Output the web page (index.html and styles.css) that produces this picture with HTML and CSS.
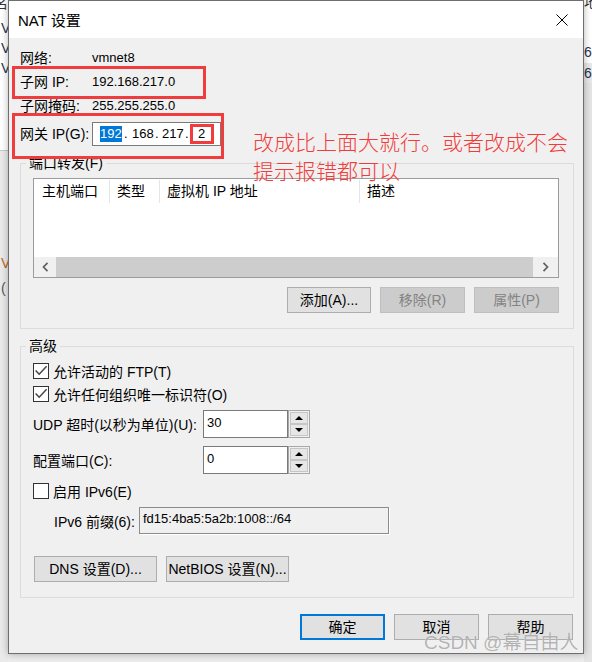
FILE: index.html
```html
<!DOCTYPE html>
<html lang="zh-CN">
<head>
<meta charset="utf-8">
<title>NAT 设置</title>
<link rel="stylesheet" href="styles.css">
</head>
<body>
<div class="desk">
  <div class="strip strip-l">
    <div class="sl sl1">名</div>
    <div class="sl sl2">V</div>
    <div class="sl">V</div>
    <div class="sl">V</div>
    <div class="sl sl5">V</div>
    <div class="sl sl6">(</div>
  </div>

  <div class="dialog">
    <div class="titlebar">
      <span class="title">NAT 设置</span>
      <svg class="close" width="12" height="12" viewBox="0 0 12 12"><path d="M0.5 0.5 L11.5 11.5 M11.5 0.5 L0.5 11.5" stroke="#000" stroke-width="1" fill="none"/></svg>
    </div>

    <div class="content">
      <div class="info">
        <div class="lbl">网络:</div><div class="val">vmnet8</div>
        <div class="lbl">子网 IP:</div><div class="val">192.168.217.0</div>
        <div class="lbl">子网掩码:</div><div class="val">255.255.255.0</div>
        <div class="lbl gw">网关 IP(G):</div>
        <div class="val gw">
          <div class="ipbox">
            <span class="sel">192</span><span class="dot d1">.</span><span class="seg">168</span><span class="dot d2">.</span><span class="seg">217</span><span class="dot d3">.</span><span class="seg seg4">2</span>
          </div>
        </div>
      </div>

      <fieldset class="group g1">
        <legend>端口转发(F)</legend>
        <div class="list">
          <div class="lhead">
            <div class="col c1">主机端口</div>
            <div class="col c2">类型</div>
            <div class="col c3">虚拟机 IP 地址</div>
            <div class="col c4">描述</div>
          </div>
          <div class="lbody"></div>
          <div class="hscroll">
            <div class="sbtn sl-btn"><svg width="7" height="10" viewBox="0 0 7 10"><polyline points="5.5,0.8 1.5,5 5.5,9.2" fill="none" stroke="#606060" stroke-width="1.7"/></svg></div>
            <div class="thumb"></div>
            <div class="sbtn sr-btn"><svg width="7" height="10" viewBox="0 0 7 10"><polyline points="1.5,0.8 5.5,5 1.5,9.2" fill="none" stroke="#606060" stroke-width="1.7"/></svg></div>
          </div>
        </div>
        <div class="btnrow">
          <button class="btn w84">添加(A)...</button>
          <button class="btn dis w85">移除(R)</button>
          <button class="btn dis w85">属性(P)</button>
        </div>
      </fieldset>

      <fieldset class="group g2">
        <legend>高级</legend>
        <div class="chk first">
          <span class="cbox"><svg width="14" height="14" viewBox="0 0 14 14"><polyline points="1.6,6.4 5.2,10.2 12.6,2.2" fill="none" stroke="#454545" stroke-width="1.5"/></svg></span>
          <span>允许活动的 FTP(T)</span>
        </div>
        <div class="chk">
          <span class="cbox"><svg width="14" height="14" viewBox="0 0 14 14"><polyline points="1.6,6.4 5.2,10.2 12.6,2.2" fill="none" stroke="#454545" stroke-width="1.5"/></svg></span>
          <span>允许任何组织唯一标识符(O)</span>
        </div>
        <div class="frow udp">
          <div class="flabel">UDP 超时(以秒为单位)(U):</div>
          <div class="spin">
            <div class="spin-in">30</div>
            <div class="spin-btns"><div class="sb up"></div><div class="sb down"></div></div>
          </div>
        </div>
        <div class="frow port">
          <div class="flabel">配置端口(C):</div>
          <div class="spin">
            <div class="spin-in">0</div>
            <div class="spin-btns"><div class="sb up"></div><div class="sb down"></div></div>
          </div>
        </div>
        <div class="chk v6">
          <span class="cbox"></span>
          <span>启用 IPv6(E)</span>
        </div>
        <div class="prow">
          <div class="plabel">IPv6 前缀(6):</div>
          <div class="pfield">fd15:4ba5:5a2b:1008::/64</div>
        </div>
        <div class="btnrow2">
          <button class="btn w123">DNS 设置(D)...</button>
          <button class="btn w123">NetBIOS 设置(N)...</button>
        </div>
      </fieldset>

      <div class="footer">
        <button class="btn w85 def">确定</button>
        <button class="btn w85">取消</button>
        <button class="btn w85">帮助</button>
      </div>
    </div>
  </div>

  <div class="strip strip-r">
    <div class="sr sr1">地</div>
    <div class="sr sr2">68</div>
    <div class="sr sr3">68</div>
  </div>

  <div class="anno a1"></div>
  <div class="anno a2"></div>
  <div class="anno a3"></div>
  <div class="note">改成比上面大就行。或者改成不会<br>提示报错都可以</div>
  <div class="watermark">CSDN @幕自由人</div>
</div>
</body>
</html>
```

FILE: styles.css
```css
* { box-sizing: border-box; }
html, body { margin: 0; padding: 0; }
body {
  width: 592px;
  height: 662px;
  overflow: hidden;
  background: #ececec;
  font-family: "Liberation Sans", "Noto Sans CJK SC", sans-serif;
  font-size: 14px;
  color: #000;
}
.desk {
  position: relative;
  width: 592px;
  height: 662px;
  overflow: hidden;
  display: flex;
  align-items: flex-start;
}

/* windows behind the dialog */
.strip {
  width: 8px;
  height: 662px;
  overflow: hidden;
  flex: none;
  font-size: 14px;
  line-height: 20px;
  color: #1f3352;
  white-space: nowrap;
}
.strip-l { background: linear-gradient(#ffffff 0, #ffffff 150px, #c8c8c8 150px, #c8c8c8 151px, #eaeaea 151px); }
.strip-r { background: linear-gradient(#ffffff 0, #ffffff 80px, #e4e4e4 80px); }
.sl { height: 20px; padding-left: 1px; }
.sl1 { margin: -7px 0 0 -7px; color: #333; }
.sl2 { margin-top: 5px; }
.sl5 { margin-top: 175px; color: #c0651e; }
.sl6 { margin-top: 5px; color: #555; }
.sr { height: 20px; }
.sr1 { margin: -8px 0 0 0; color: #333; }
.sr2 { margin-top: 30px; }
.sr3 { margin-top: 1px; background: #e8e8e8; }

/* dialog window */
.dialog {
  position: relative;
  z-index: 1;
  flex: none;
  width: 576px;
  height: 654px;
  border: 1px solid #6e6e6e;
  background: #f0f0f0;
  box-shadow: 0 0 7px rgba(0, 0, 0, 0.3);
}
.titlebar {
  height: 37px;
  background: #ffffff;
  display: flex;
  align-items: center;
  justify-content: space-between;
  padding: 0 15px 0 9px;
}
.title { font-size: 15px; }
.close { display: block; }

.content { padding: 8px 9px 0 11px; }

.info {
  display: grid;
  grid-template-columns: 72px auto;
  grid-template-rows: 24px 24px 24px 28px;
  align-items: center;
}
.lbl { line-height: 24px; white-space: nowrap; }
.val { font-size: 13px; line-height: 24px; }
.gw { align-self: end; }
.ipbox {
  width: 129px;
  height: 24px;
  border: 1px solid #7a7a7a;
  background: #ffffff;
  display: flex;
  align-items: center;
  padding-left: 7px;
  font-size: 13px;
  line-height: 16px;
}
.sel { background: #0078d7; color: #ffffff; width: 22px; }
.seg { width: 22px; }
.seg4 { width: 23px; text-align: center; }
.dot { display: block; }
.d1 { width: 10px; padding-left: 2px; }
.d2 { width: 8px; padding-left: 1px; }
.d3 { width: 6px; padding-left: 1px; }

/* group boxes */
.group {
  margin: 8px 0 0 0;
  padding: 0 0 15px 0;
  border: 1px solid #dcdcdc;
  width: 554px;
  min-width: 0;
}
.group legend {
  margin-left: 5px;
  padding: 0 3px;
  height: 19px;
  line-height: 19px;
  font-size: 14px;
}

.list {
  margin: 5px 14px 0 12px;
  height: 100px;
  border: 1px solid #9c9c9c;
  background: #ffffff;
  display: flex;
  flex-direction: column;
}
.lhead { display: flex; height: 25px; flex: none; }
.col {
  height: 23px;
  margin-top: 1px;
  line-height: 23px;
  border-right: 1px solid #e5e5e5;
  padding-left: 7px;
  white-space: nowrap;
}
.c1 { width: 76px; padding-left: 8px; }
.c2 { width: 50px; }
.c3 { width: 200px; }
.c4 { flex: 1; border-right: none; }
.lbody { flex: 1; }
.hscroll { height: 20px; flex: none; display: flex; background: #f0f0f0; }
.sbtn { display: flex; align-items: center; justify-content: center; background: #f0f0f0; }
.sl-btn { width: 22px; }
.sr-btn { width: 25px; }
.sbtn svg { display: block; }
.thumb { flex: 1; background: #cdcdcd; }

.btn {
  font-family: "Liberation Sans", "Noto Sans CJK SC", sans-serif;
  font-size: 14px;
  color: #000;
  height: 26px;
  padding: 0;
  margin: 0;
  border: 1px solid #adadad;
  background: #e1e1e1;
  line-height: 22px;
  white-space: nowrap;
}
.btn.dis { background: #cccccc; border-color: #bfbfbf; color: #838383; }
.btn.def { border: 2px solid #0078d7; }
.w84 { width: 84px; }
.w85 { width: 85px; }
.w123 { width: 123px; }

.btnrow {
  display: flex;
  justify-content: flex-end;
  gap: 9px;
  margin: 9px 14px 0 0;
}

.chk {
  display: flex;
  align-items: center;
  gap: 4px;
  height: 23px;
  margin-left: 12px;
}
.chk.first { margin-top: 3px; }
.chk.v6 { margin-top: 5px; }
.cbox {
  width: 16px;
  height: 16px;
  border: 1px solid #333333;
  background: #ffffff;
  flex: none;
}
.cbox svg { display: block; }

.frow {
  display: flex;
  align-items: center;
  height: 28px;
  margin-left: 12px;
}
.frow.udp { margin-top: 5px; }
.frow.port { margin-top: 8px; }
.flabel { width: 170px; white-space: nowrap; }
.spin { display: flex; height: 28px; }
.spin-in {
  width: 85px;
  height: 28px;
  border: 1px solid #7a7a7a;
  background: #ffffff;
  font-size: 13px;
  line-height: 16px;
  padding: 4px 0 0 3px;
}
.spin-btns {
  width: 22px;
  height: 28px;
  border: 1px solid #a8a8a8;
  padding: 1px;
  display: flex;
  flex-direction: column;
  background: #f0f0f0;
}
.sb {
  flex: 1;
  background: #e6e6e6;
  border: 1px solid #c6c6c6;
  display: flex;
  align-items: center;
  justify-content: center;
}
.sb::after {
  content: "";
  width: 0;
  height: 0;
  border-left: 4px solid transparent;
  border-right: 4px solid transparent;
}
.sb.up::after { border-bottom: 4px solid #000; }
.sb.down::after { border-top: 4px solid #000; }

.prow {
  display: flex;
  align-items: center;
  height: 27px;
  margin: 5px 0 0 33px;
}
.plabel { width: 85px; white-space: nowrap; }
.pfield {
  width: 250px;
  height: 27px;
  border: 1px solid #8c8c8c;
  box-shadow: 1px 1px 0 #ffffff;
  background: #f0f0f0;
  font-size: 13px;
  line-height: 16px;
  padding: 3px 0 0 3px;
}

.btnrow2 {
  display: flex;
  gap: 9px;
  margin: 22px 0 0 13px;
}

.footer {
  display: flex;
  justify-content: flex-end;
  gap: 9px;
  margin: 16px 1px 0 0;
}

/* annotations laid over the screenshot */
.anno {
  position: absolute;
  z-index: 3;
  border: 3px solid #f03c3c;
}
.a1 { left: 12px; top: 66px; width: 194px; height: 33px; }
.a2 { left: 12px; top: 113px; width: 212px; height: 46px; }
.a3 { left: 190px; top: 124px; width: 24px; height: 20px; }
.note {
  position: absolute;
  z-index: 3;
  left: 253px;
  top: 127px;
  font-family: "Noto Sans CJK SC", sans-serif;
  font-weight: 300;
  font-size: 21px;
  line-height: 29px;
  color: #f23b3b;
  white-space: nowrap;
}
.watermark {
  position: absolute;
  z-index: 3;
  left: 424px;
  top: 632px;
  font-family: "Liberation Sans", "Noto Sans CJK SC", sans-serif;
  font-size: 19px;
  line-height: 22px;
  color: rgba(130, 130, 130, 0.6);
  text-shadow: 0 0 1px rgba(255, 255, 255, 0.9);
  white-space: nowrap;
}
```
